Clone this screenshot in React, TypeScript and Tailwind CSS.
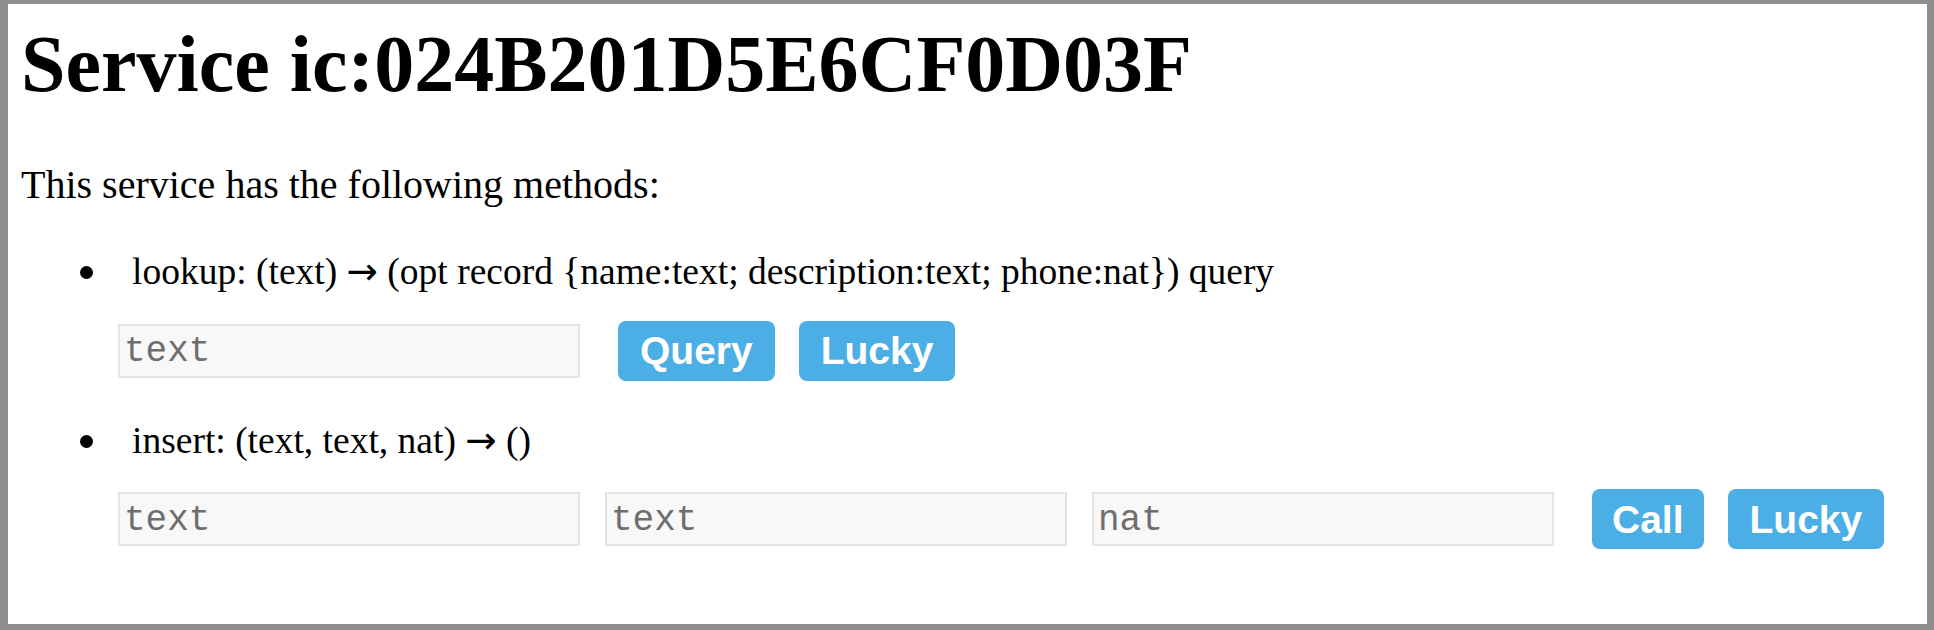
import React from "react";

type Method = {
  name: string;
  params: string;
  result: string;
  args: string[];
  action: string;
};

const methods: Method[] = [
  {
    name: "lookup",
    params: "(text)",
    result: "(opt record {name:text; description:text; phone:nat}) query",
    args: ["text"],
    action: "Query",
  },
  {
    name: "insert",
    params: "(text, text, nat)",
    result: "()",
    args: ["text", "text", "nat"],
    action: "Call",
  },
];

const serif = { fontFamily: '"Liberation Serif", "Times New Roman", serif' };

const Button = ({ label }: { label: string }) => (
  <button
    className={
      "h-[60px] rounded-[8px] bg-[#4baee5] text-white font-bold text-[39px] leading-none " +
      (label === "Call" ? "px-[20px]" : "px-[22px]")
    }
    style={{ fontFamily: '"Liberation Sans", Arial, sans-serif' }}
  >
    {label}
  </button>
);

const MethodItem = ({ m, first }: { m: Method; first: boolean }) => (
  <li className={first ? "" : "mt-[41px]"}>
    {/* signature line */}
    <div className="flex items-center">
      <span className="ml-[72px] w-[13px] h-[13px] rounded-full bg-black mt-[2px]" />
      <span className="ml-[39px] text-[37.5px] leading-none text-black whitespace-pre">
        {m.name}: {m.params}{" "}
        <span style={{ fontFamily: '"DejaVu Sans", sans-serif' }}>→</span> {m.result}
      </span>
    </div>

    {/* inputs + buttons */}
    <div className="mt-[30px] ml-[110px] flex items-center h-[60px]">
      <div className="flex items-center gap-[25px]">
        {m.args.map((a, i) => (
          <input
            key={i}
            placeholder={a}
            className="w-[462px] h-[54px] border-2 border-[#e4e4e4] bg-[#f8f8f8] px-[4px] pt-[3px] text-[36px] placeholder:text-[#6e6e6e] outline-none"
            style={{ fontFamily: '"Liberation Mono", "Courier New", monospace' }}
          />
        ))}
      </div>
      <div className="ml-[38px] flex items-center gap-[24px]">
        <Button label={m.action} />
        <Button label="Lucky" />
      </div>
    </div>
  </li>
);

export default function App() {
  return (
    <div className="h-screen flex flex-col bg-[#8e8e8e] pl-[8px] pt-[4px] pr-[7px] pb-[6px]">
      <div className="flex-1 bg-white pl-[13px] overflow-hidden" style={serif}>
        <h1 className="mt-[20px] text-[80px] leading-none font-bold text-black">
          Service ic:024B201D5E6CF0D03F
        </h1>
        <p className="mt-[61px] text-[40px] leading-none text-black">
          This service has the following methods:
        </p>
        <ul className="mt-[48px] -ml-[13px]">
          {methods.map((m, i) => (
            <MethodItem key={i} m={m} first={i === 0} />
          ))}
        </ul>
      </div>
    </div>
  );
}
